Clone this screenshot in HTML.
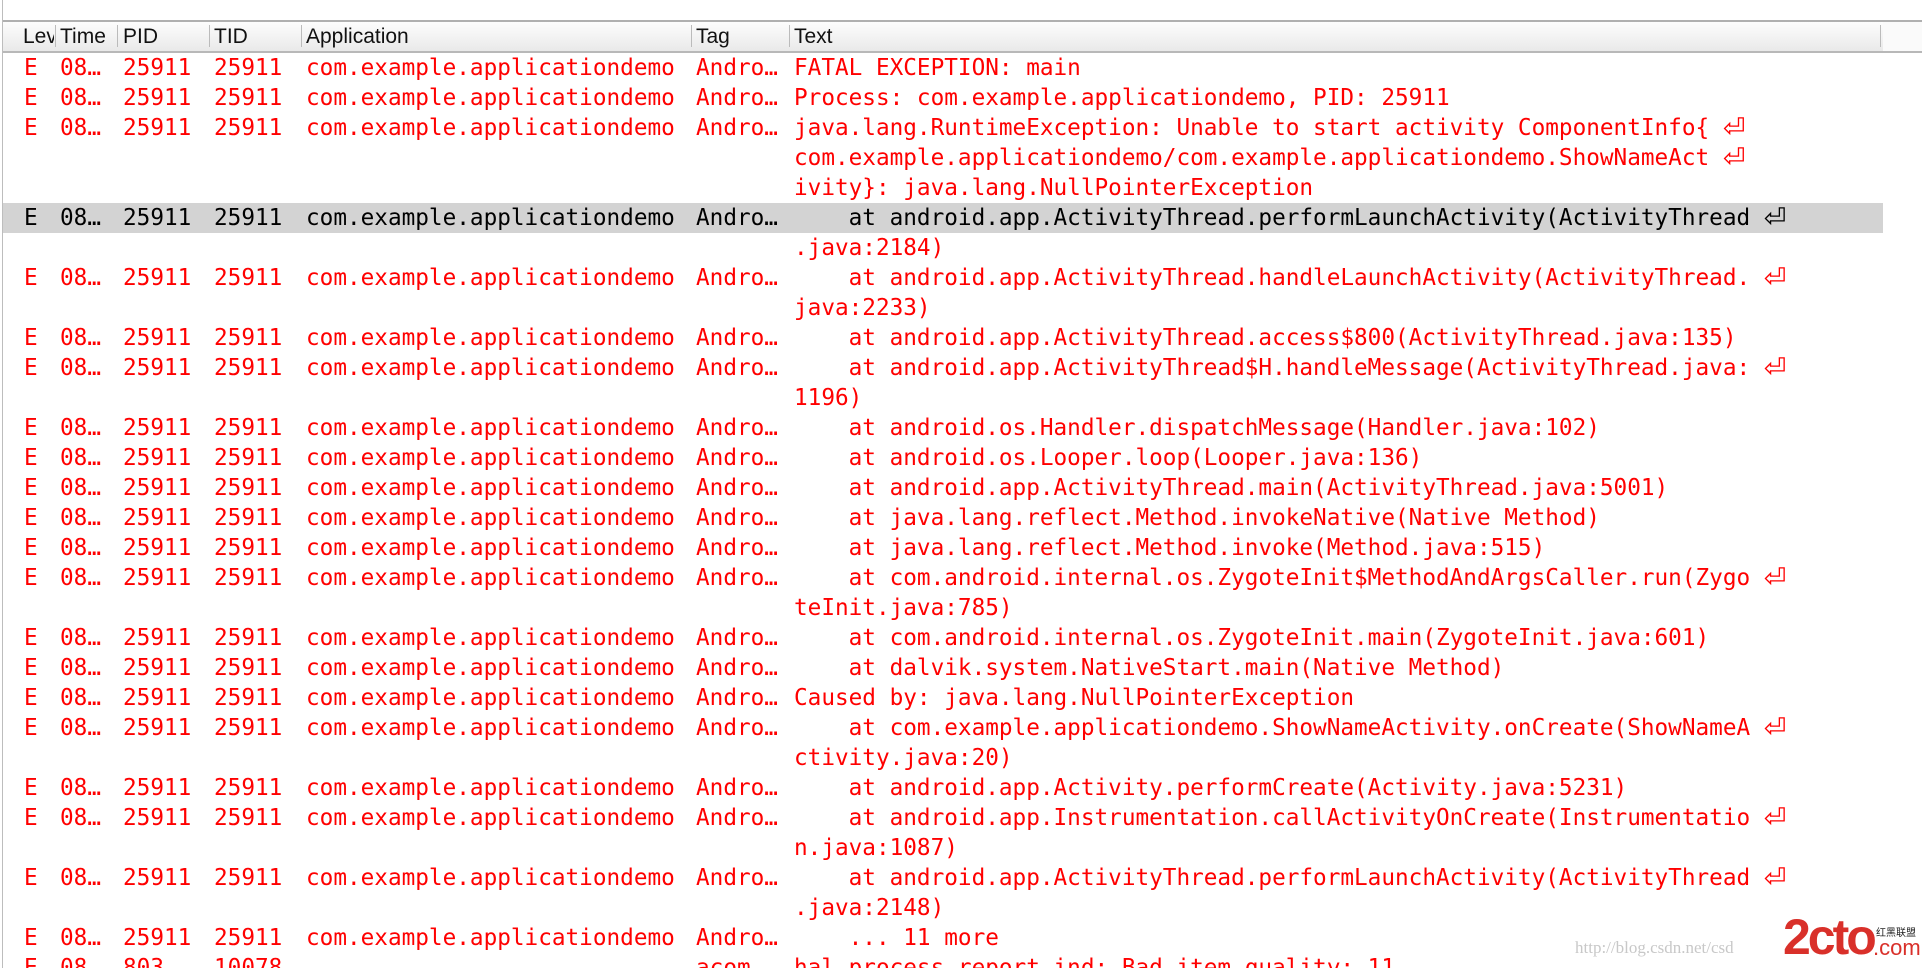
<!DOCTYPE html>
<html><head><meta charset="utf-8"><style>
html,body{margin:0;padding:0;width:1922px;height:968px;overflow:hidden;background:#fff;}
body{position:relative;font-family:"DejaVu Sans Mono","Liberation Mono",monospace;}
.lb{position:absolute;left:2px;top:0;width:1px;height:968px;background:#bdbdbd;}
.hdr{position:absolute;left:3px;top:20px;width:1880px;height:29px;border-top:2px solid #b0b0b0;border-bottom:2px solid #b8b8b8;background:linear-gradient(#fdfdfd,#f3f3f3 50%,#e9e9e9);font-family:"Liberation Sans",sans-serif;font-size:21px;color:#111;}
.hdr span{position:absolute;top:2px;line-height:26px;}
.hdr i{position:absolute;top:3px;width:1px;height:22px;background:#bbb;}
.rb{position:absolute;left:1883px;top:20px;width:39px;height:29px;border-top:2px solid #b0b0b0;border-bottom:2px solid #b8b8b8;background:#fafafa;}
.r{position:absolute;left:3px;width:1880px;height:30px;line-height:30px;font-size:22.7px;color:#f00;white-space:pre;}
.r span{position:absolute;top:0;}
.r b{font-weight:normal;font-family:"DejaVu Sans",sans-serif;font-size:27px;display:inline-block;line-height:20px;vertical-align:-2px;}
.hl{background:#d3d3d3;color:#000;}
</style></head><body>
<div class="lb"></div>
<div class="hdr">
<span style="left:20px;width:31px;overflow:hidden">Lev</span><i style="left:52px"></i>
<span style="left:57px">Time</span><i style="left:114px"></i>
<span style="left:120px">PID</span><i style="left:206px"></i>
<span style="left:211px">TID</span><i style="left:298px"></i>
<span style="left:303px">Application</span><i style="left:688px"></i>
<span style="left:693px">Tag</span><i style="left:786px"></i>
<span style="left:791px">Text</span><i style="left:1877px"></i>
</div>
<div class="rb"></div>
<div id="rows"></div>
<script>
var F='E|08…|25911|25911|com.example.applicationdemo|Andro…|';
var L=[
[1,'FATAL EXCEPTION: main'],
[1,'Process: com.example.applicationdemo, PID: 25911'],
[1,'java.lang.RuntimeException: Unable to start activity ComponentInfo{ ⏎'],
[0,'com.example.applicationdemo/com.example.applicationdemo.ShowNameAct ⏎'],
[0,'ivity}: java.lang.NullPointerException'],
[2,'    at android.app.ActivityThread.performLaunchActivity(ActivityThread ⏎'],
[0,'.java:2184)'],
[1,'    at android.app.ActivityThread.handleLaunchActivity(ActivityThread. ⏎'],
[0,'java:2233)'],
[1,'    at android.app.ActivityThread.access$800(ActivityThread.java:135)'],
[1,'    at android.app.ActivityThread$H.handleMessage(ActivityThread.java: ⏎'],
[0,'1196)'],
[1,'    at android.os.Handler.dispatchMessage(Handler.java:102)'],
[1,'    at android.os.Looper.loop(Looper.java:136)'],
[1,'    at android.app.ActivityThread.main(ActivityThread.java:5001)'],
[1,'    at java.lang.reflect.Method.invokeNative(Native Method)'],
[1,'    at java.lang.reflect.Method.invoke(Method.java:515)'],
[1,'    at com.android.internal.os.ZygoteInit$MethodAndArgsCaller.run(Zygo ⏎'],
[0,'teInit.java:785)'],
[1,'    at com.android.internal.os.ZygoteInit.main(ZygoteInit.java:601)'],
[1,'    at dalvik.system.NativeStart.main(Native Method)'],
[1,'Caused by: java.lang.NullPointerException'],
[1,'    at com.example.applicationdemo.ShowNameActivity.onCreate(ShowNameA ⏎'],
[0,'ctivity.java:20)'],
[1,'    at android.app.Activity.performCreate(Activity.java:5231)'],
[1,'    at android.app.Instrumentation.callActivityOnCreate(Instrumentatio ⏎'],
[0,'n.java:1087)'],
[1,'    at android.app.ActivityThread.performLaunchActivity(ActivityThread ⏎'],
[0,'.java:2148)'],
[1,'    ... 11 more'],
[3,'hal_process_report_ind: Bad item quality: 11']
];
var X=[21,57,120,211,303,693,791];
var h='';
function esc(s){return s.replace(/&/g,'&amp;').replace(/</g,'&lt;').replace(/⏎/g,'<b>⏎</b>');}
for(var i=0;i<L.length;i++){
 var t=53+i*30,k=L[i][0],c=(k==2)?'r hl':'r';
 var f;
 if(k==0)f=['','','','','',''];
 else if(k==3)f=['E','08…','803','10078','','acom…'];
 else f=F.split('|');
 f=f.slice(0,6);f.push(L[i][1]);
 h+='<div class="'+c+'" style="top:'+t+'px">';
 for(var j=0;j<7;j++){if(f[j])h+='<span style="left:'+X[j]+'px">'+esc(f[j])+'</span>';}
 h+='</div>';
}
document.getElementById('rows').innerHTML=h;
</script>
<div style="position:absolute;left:1575px;top:938px;font-family:'Liberation Serif',serif;font-size:17px;color:#c8c8c8;">http://blog.csdn.net/csd</div>
<div style="position:absolute;left:1783px;top:912px;font-family:'Liberation Sans',sans-serif;font-weight:bold;font-size:50px;line-height:50px;color:#d9302a;letter-spacing:-3px;">2cto</div>
<div style="position:absolute;left:1876px;top:926px;font-family:'Noto Sans CJK SC',sans-serif;font-size:10px;line-height:12px;color:#222;">红黑联盟</div>
<div style="position:absolute;left:1873px;top:937px;font-family:'Liberation Sans',sans-serif;font-size:22px;line-height:22px;color:#d9302a;">.com</div>
</body></html>
